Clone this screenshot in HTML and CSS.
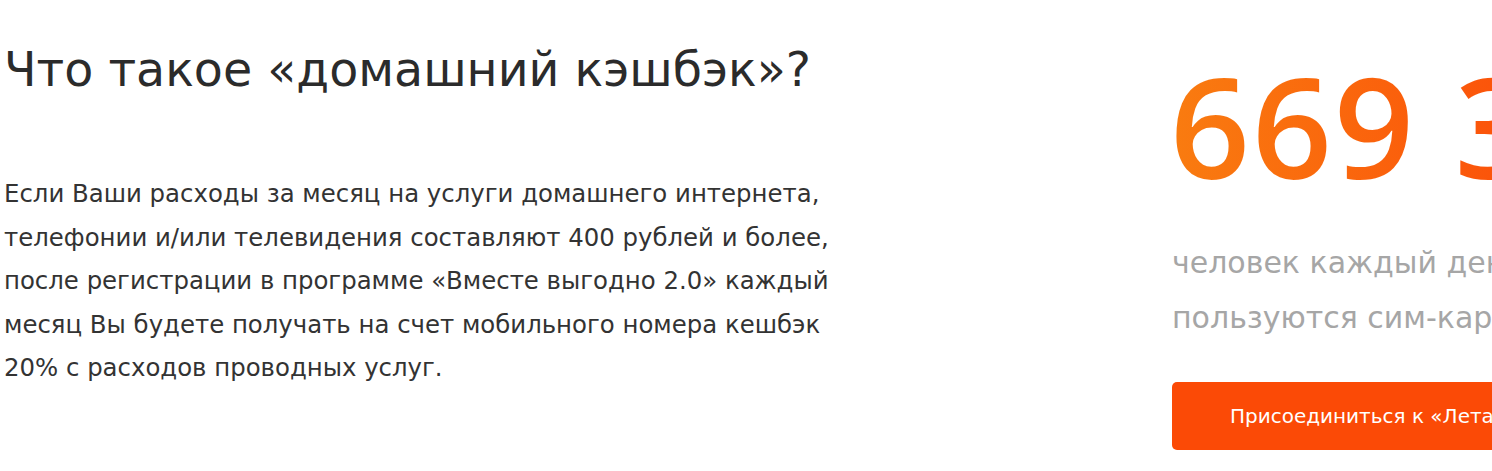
FILE: index.html
```html
<!DOCTYPE html>
<html lang="ru">
<head>
<meta charset="utf-8">
<link rel="stylesheet" href="styles.css">
</head>
<body>
<div class="page">
  <section class="about">
    <h2 class="about__title">Что такое «домашний кэшбэк»?</h2>
    <p class="about__text">Если Ваши расходы за месяц на услуги домашнего интернета, телефонии и/или телевидения составляют 400 рублей и более, после регистрации в программе «Вместе выгодно 2.0» каждый месяц Вы будете получать на счет мобильного номера кешбэк 20% с расходов проводных услуг.</p>
  </section>
  <aside class="stats">
    <div class="stats__number">669 312</div>
    <p class="stats__caption">человек каждый день<br>пользуются сим-картами «Летай»</p>
    <a class="stats__button" href="#">Присоединиться к «Летай»</a>
  </aside>
</div>
</body>
</html>
```
FILE: styles.css
```css
html, body {
  margin: 0;
  padding: 0;
  background: #fff;
  overflow: hidden;
}
.page {
  display: flex;
  width: 1900px;
  padding-left: 4px;
  font-family: "DejaVu Sans", sans-serif;
}
.about {
  width: 840px;
  flex: none;
}
.about__title {
  margin: 38px 0 0;
  font-size: 47.5px;
  font-weight: 400;
  line-height: 64px;
  color: #2b2b2b;
}
.about__text {
  margin: 70px 0 0;
  width: 845px;
  font-size: 24.4px;
  font-weight: 400;
  line-height: 43.5px;
  color: #333;
}
.stats {
  margin-left: 324px;
  width: 700px;
  flex: none;
}
.stats__number {
  margin-top: 50px;
  padding-left: 2px;
  font-family: "Open Sans", sans-serif;
  font-size: 140px;
  font-weight: 600;
  line-height: 150px;
  letter-spacing: 2px;
  background: linear-gradient(90deg, #f97c10 0px, #fb540a 330px);
  -webkit-background-clip: text;
  background-clip: text;
  color: transparent;
  white-space: nowrap;
}
.stats__caption {
  margin: 35px 0 0;
  padding-left: 4px;
  font-size: 30px;
  line-height: 55px;
  color: #a6a6a6;
  white-space: nowrap;
}
.stats__button {
  display: flex;
  align-items: center;
  justify-content: center;
  margin-top: 37px;
  margin-left: 4px;
  width: 405px;
  height: 68px;
  border-radius: 5px;
  background: #fb4a06;
  color: #fff;
  font-size: 20px;
  text-decoration: none;
  white-space: nowrap;
}
```
